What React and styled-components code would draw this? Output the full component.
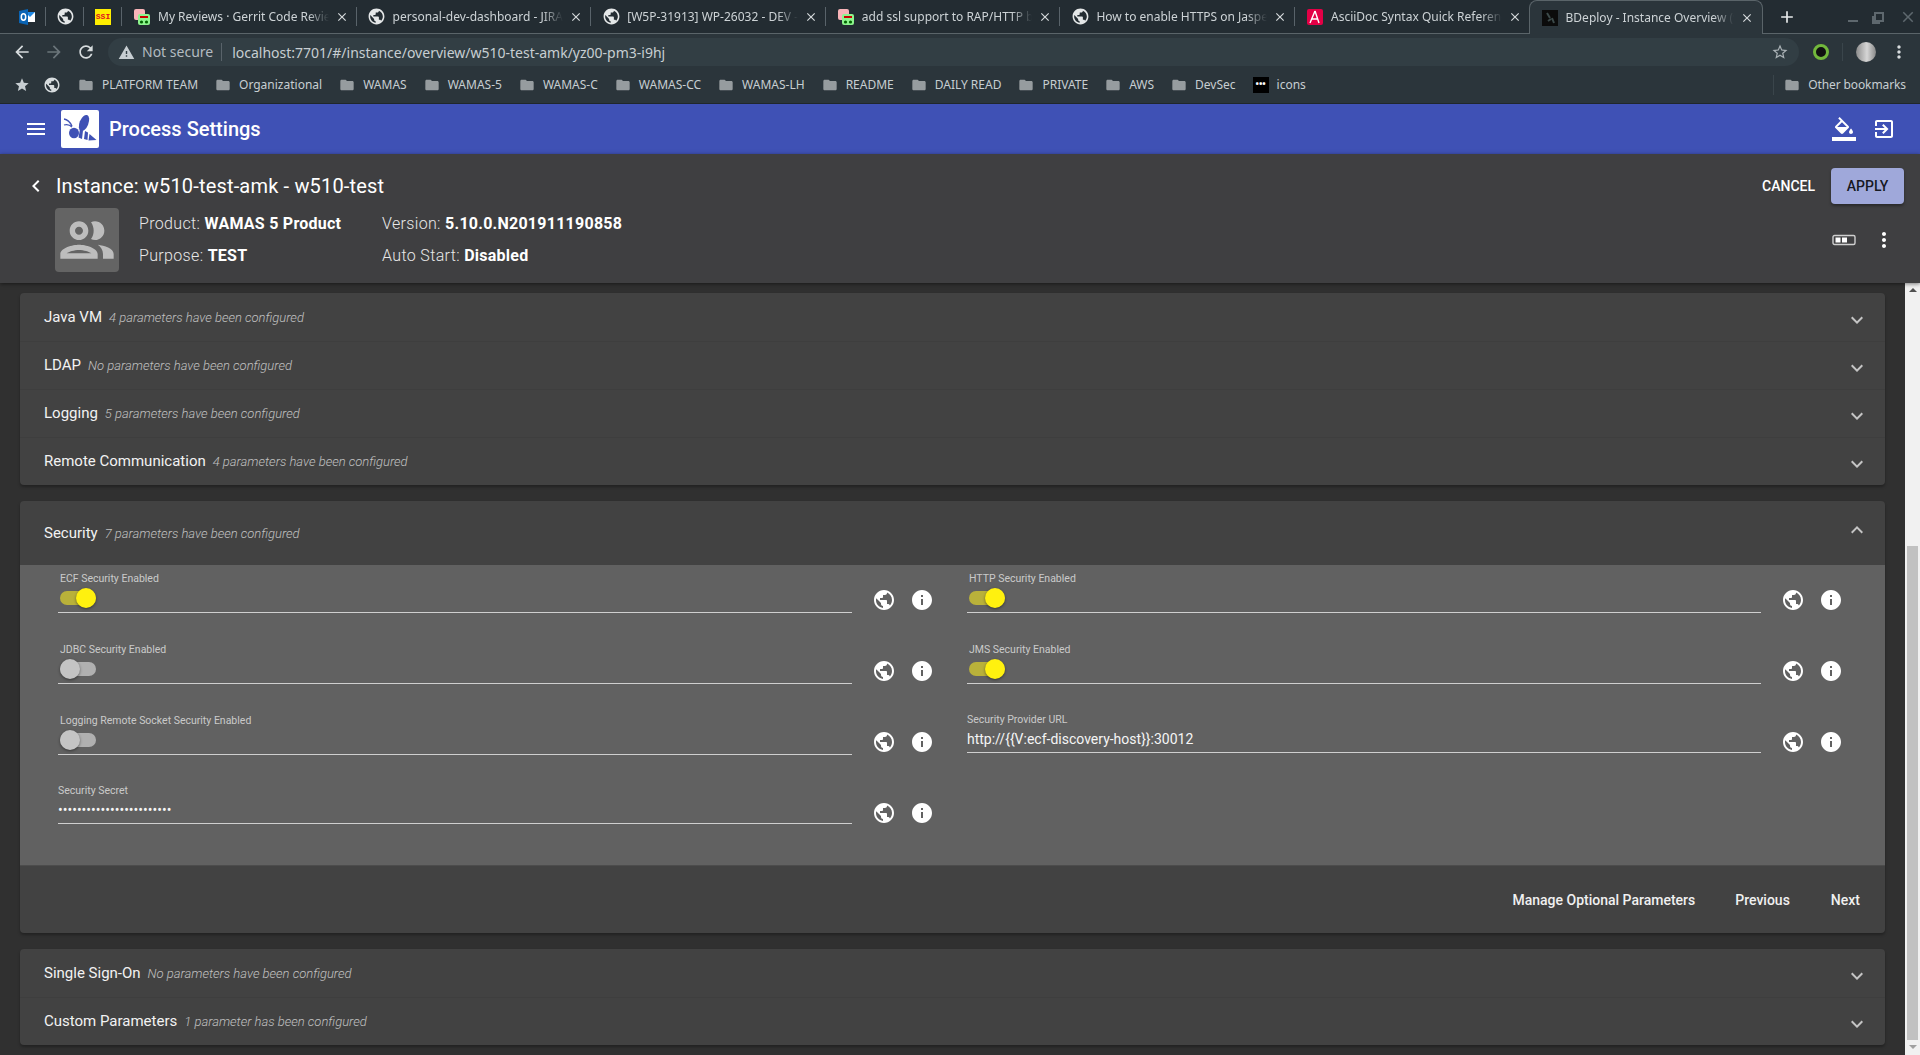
import React from "react"
import styled, { createGlobalStyle } from "styled-components"

const paths = {
    globe: "M12 2C6.48 2 2 6.48 2 12s4.48 10 10 10 10-4.48 10-10S17.52 2 12 2zm-1 17.93c-3.95-.49-7-3.85-7-7.93 0-.62.08-1.21.21-1.79L9 15v1c0 1.1.9 2 2 2v1.93zm6.9-2.54c-.26-.81-1-1.39-1.9-1.39h-1v-3c0-.55-.45-1-1-1H8v-2h2c.55 0 1-.45 1-1V7h2c1.1 0 2-.9 2-2v-.41c2.93 1.19 5 4.06 5 7.41 0 2.08-.8 3.97-2.1 5.39z",
    info: "M12 2C6.48 2 2 6.48 2 12s4.48 10 10 10 10-4.48 10-10S17.52 2 12 2zm1 15h-2v-6h2v6zm0-8h-2V7h2v2z",
    expandMore: "M16.59 8.59L12 13.17 7.41 8.59 6 10l6 6 6-6z",
    expandLess: "M12 8l-6 6 1.41 1.41L12 10.83l4.59 4.58L18 14z",
    menu: "M3 18h18v-2H3v2zm0-5h18v-2H3v2zm0-7v2h18V6H3z",
    fill: "M16.56 8.94L7.62 0 6.21 1.41l2.38 2.38-5.15 5.15c-.59.59-.59 1.54 0 2.12l5.5 5.5c.29.29.68.44 1.06.44s.77-.15 1.06-.44l5.5-5.5c.59-.58.59-1.53 0-2.12zM5.21 10L10 5.21 14.79 10H5.21zM19 11.5s-2 2.17-2 3.5c0 1.1.9 2 2 2s2-.9 2-2c0-1.33-2-3.5-2-3.5zM0 20h24v4H0z",
    exit: "M10.09 15.59L11.5 17l5-5-5-5-1.41 1.41L12.67 11H3v2h9.67l-2.58 2.59zM19 3H5c-1.11 0-2 .9-2 2v4h2V5h14v14H5v-4H3v4c0 1.1.89 2 2 2h14c1.1 0 2-.9 2-2V5c0-1.1-.9-2-2-2z",
    moreVert: "M12 8c1.1 0 2-.9 2-2s-.9-2-2-2-2 .9-2 2 .9 2 2 2zm0 2c-1.1 0-2 .9-2 2s.9 2 2 2 2-.9 2-2-.9-2-2-2zm0 6c-1.1 0-2 .9-2 2s.9 2 2 2 2-.9 2-2-.9-2-2-2z",
    chevronLeft: "M15.41 7.41L14 6l-6 6 6 6 1.41-1.41L10.83 12z",
    people: "M9 13.75c-2.34 0-7 1.17-7 3.5V19h14v-1.75c0-2.33-4.66-3.5-7-3.5zM4.34 17c.84-.58 2.87-1.25 4.66-1.25s3.82.67 4.66 1.25H4.34zM9 12c1.93 0 3.5-1.57 3.5-3.5S10.93 5 9 5 5.5 6.57 5.5 8.5 7.07 12 9 12zm0-5c.83 0 1.5.67 1.5 1.5S9.83 10 9 10s-1.5-.67-1.5-1.5S8.17 7 9 7zm7.04 6.81c1.16.84 1.96 1.96 1.96 3.44V19h4v-1.75c0-2.02-3.5-3.17-5.96-3.44zM15 12c1.93 0 3.5-1.57 3.5-3.5S16.93 5 15 5c-.54 0-1.04.13-1.5.35.63.89 1 1.98 1 3.15s-.37 2.26-1 3.15c.46.22.96.35 1.5.35z",
    warning: "M1 21h22L12 2 1 21zm12-3h-2v-2h2v2zm0-4h-2v-4h2v4z",
    back: "M20 11H7.83l5.59-5.59L12 4l-8 8 8 8 1.41-1.41L7.83 13H20v-2z",
    forward: "M12 4l-1.41 1.41L16.17 11H4v2h12.17l-5.58 5.59L12 20l8-8z",
    refresh: "M17.65 6.35C16.2 4.9 14.21 4 12 4c-4.42 0-7.99 3.58-7.99 8s3.57 8 7.99 8c3.73 0 6.84-2.55 7.73-6h-2.08c-.82 2.33-3.04 4-5.65 4-3.31 0-6-2.69-6-6s2.69-6 6-6c1.66 0 3.14.69 4.22 1.78L13 11h7V4l-2.35 2.35z",
    star: "M12 17.27L18.18 21l-1.64-7.03L22 9.24l-7.19-.61L12 2 9.19 8.63 2 9.24l5.46 4.73L5.82 21z",
    starBorder: "M22 9.24l-7.19-.62L12 2 9.19 8.63 2 9.24l5.46 4.73L5.82 21 12 17.27 18.18 21l-1.63-7.03L22 9.24zM12 15.4l-3.76 2.27 1-4.28-3.32-2.88 4.38-.38L12 6.1l1.71 4.04 4.38.38-3.32 2.88 1 4.28L12 15.4z",
    folder: "M10 4H4c-1.1 0-1.99.9-1.99 2L2 18c0 1.1.9 2 2 2h16c1.1 0 2-.9 2-2V8c0-1.1-.9-2-2-2h-8l-2-2z",
    close: "M19 6.41L17.59 5 12 10.59 6.41 5 5 6.41 10.59 12 5 17.59 6.41 19 12 13.41 17.59 19 19 17.59 13.41 12z",
    plus: "M19 13h-6v6h-2v-6H5v-2h6V5h2v6h6v2z",
}

const Svg = styled.svg`
    width: ${props => props.$size || 24}px;
    height: ${props => props.$size || 24}px;
    fill: ${props => props.$color || "#fff"};
    flex: none;
    display: block;
`

const Icon = ({ name, size, color }) => (
    <Svg viewBox="0 0 24 24" $size={size} $color={color}><path d={paths[name]} /></Svg>
)

const GlobalStyle = createGlobalStyle`
    html, body {
        margin: 0;
        height: 100%;
        overflow: hidden;
        background: #303030;
    }
    * {
        box-sizing: border-box;
    }
`

const Page = styled.div`
    display: flex;
    flex-direction: column;
    height: 1055px;
    font-family: Roboto, "Liberation Sans", sans-serif;
    color: #fff;
`

/* browser chrome */
const TabStrip = styled.div`
    height: 34px;
    display: flex;
    padding-left: 8px;
    background: #232c32;
    border-bottom: 1px solid #5a6469;
    font-family: "Noto Sans", sans-serif;
    font-size: 12px;
    color: #cdd3d6;
`

const PinnedTab = styled.div`
    width: 38px;
    height: 33px;
    display: flex;
    align-items: center;
    justify-content: center;
    position: relative;
    &::after {
        content: "";
        position: absolute;
        right: 0;
        top: 7px;
        height: 19px;
        width: 1px;
        background: #59636a;
    }
`

const Tab = styled.div`
    width: 234.6px;
    height: ${props => props.$active ? 34 : 33}px;
    display: flex;
    align-items: center;
    padding: 0 8px 0 12px;
    position: relative;
    background: ${props => props.$active ? "#2b353b" : "transparent"};
    border: ${props => props.$active ? "1px solid #5a6469" : "0"};
    border-bottom: 0;
    border-radius: ${props => props.$active ? "8px 8px 0 0" : "0"};
    margin-left: ${props => props.$active ? "-1px" : "0"};
    z-index: ${props => props.$active ? 1 : 0};
    &::after {
        content: "";
        display: ${props => props.$plain ? "none" : "block"};
        position: absolute;
        right: 0;
        top: 7px;
        height: 19px;
        width: 1px;
        background: #59636a;
    }
`

const FaviconSlot = styled.div`
    width: 16px;
    height: 16px;
    flex: none;
    display: flex;
    align-items: center;
    justify-content: center;
`

const TabTitle = styled.span`
    flex: 1;
    margin: 0 6px 0 8px;
    white-space: nowrap;
    overflow: hidden;
    line-height: 33px;
    -webkit-mask-image: linear-gradient(to right, #000 88%, transparent 100%);
    mask-image: linear-gradient(to right, #000 88%, transparent 100%);
`

const NewTab = styled.div`
    width: 44px;
    height: 33px;
    padding-left: 4px;
    display: flex;
    align-items: center;
    justify-content: center;
`

const WindowControls = styled.div`
    margin-left: auto;
    width: 76px;
    height: 33px;
    display: flex;
    align-items: center;
    justify-content: space-between;
    padding: 0 3px 0 4px;
`

const WindowDash = styled.div`
    width: 10px;
    height: 2px;
    margin-top: 9px;
    background: #5e686e;
`

const WindowMax = styled.div`
    width: 10px;
    height: 10px;
    border: 2px solid #5e686e;
    box-shadow: -3px 3px 0 -1px #5e686e;
`

const Favicon = styled.svg`
    width: 16px;
    height: 16px;
    flex: none;
    display: block;
`

const SsiIcon = styled.div`
    width: 16px;
    height: 16px;
    flex: none;
    background: #ffee00;
    color: #e01020;
    font-family: "Liberation Mono", monospace;
    font-size: 8px;
    font-weight: 700;
    line-height: 16px;
    text-align: center;
`

const Toolbar = styled.div`
    height: 32px;
    padding-top: 4px;
    display: flex;
    background: #2b353b;
    font-family: "Noto Sans", sans-serif;
    color: #c7ced2;
`

const NavButton = styled.div`
    width: 32px;
    height: 28px;
    display: flex;
    align-items: center;
    justify-content: center;
`

const NavGroup = styled.div`
    display: flex;
    padding-left: 6px;
    width: 108px;
`

const Omnibox = styled.div`
    width: 1691px;
    height: 28px;
    border-radius: 14px;
    background: #323e44;
    display: flex;
    align-items: center;
    padding: 0 10px 0 10px;
    font-size: 14px;
`

const NotSecure = styled.span`
    margin-left: 7px;
    color: #b3bbc0;
    padding-right: 8px;
    border-right: 1px solid #59636a;
    line-height: 18px;
`

const Url = styled.span`
    margin-left: 10px;
    flex: 1;
    color: #c7ced2;
`

const ToolbarRight = styled.div`
    flex: 1;
    display: flex;
    align-items: center;
    height: 28px;
    padding-left: 14px;
`

const ExtensionIcon = styled.div`
    width: 16px;
    height: 16px;
    border-radius: 50%;
    background: #111;
    border: 3px solid #72b83c;
`

const ToolbarDivider = styled.div`
    width: 1px;
    height: 18px;
    margin: 0 13px;
    background: #3a454b;
`

const Avatar = styled.div`
    width: 20px;
    height: 20px;
    margin-right: 13px;
    border-radius: 50%;
    background: linear-gradient(90deg, #8c8c8c, #d6d6d6 55%, #888);
`

const BookmarkBar = styled.div`
    height: 38px;
    display: flex;
    align-items: center;
    background: #2b353b;
    border-bottom: 1px solid #20272b;
    font-family: "Noto Sans", sans-serif;
    font-size: 12px;
    color: #c7ced2;
    padding-left: 14px;
`

const Bookmark = styled.div`
    display: flex;
    align-items: center;
    gap: ${props => props.$gap || 8}px;
    margin-right: 17px;
    white-space: nowrap;
`

const OtherBookmarks = styled.div`
    margin-left: auto;
    padding-left: 10px;
    padding-right: 14px;
    display: flex;
    align-items: center;
    gap: 8px;
    border-left: 1px solid #3a454b;
    height: 20px;
    letter-spacing: -0.1px;
`

const IconsFavicon = styled.div`
    width: 16px;
    height: 16px;
    background: #000;
    color: #fff;
    font-size: 9px;
    line-height: 14px;
    font-weight: 700;
    text-align: center;
`

/* application */
const AppBar = styled.div`
    height: 50px;
    flex: none;
    background: #3f51b5;
    display: flex;
    align-items: center;
    padding: 0 24px;
`

const Logo = styled.div`
    width: 38px;
    height: 38px;
    margin-left: 13px;
    border-radius: 2px;
    background: #fff;
`

const AppTitle = styled.div`
    margin-left: 10px;
    font-size: 20px;
    font-weight: 500;
    flex: 1;
`

const AppActions = styled.div`
    display: flex;
    gap: 16px;
`

const InstanceHeader = styled.div`
    height: 129px;
    flex: none;
    padding: 14px 16px 0 0;
    background: #3f3f41;
    box-shadow: 0 1px 4px rgba(0, 0, 0, 0.5);
    position: relative;
    z-index: 2;
`

const TitleRow = styled.div`
    height: 36px;
    display: flex;
    align-items: center;
    padding-left: 24px;
`

const InstanceTitle = styled.div`
    margin-left: 8px;
    font-size: 20px;
    letter-spacing: 0.17px;
    flex: 1;
`

const CancelButton = styled.div`
    font-size: 14px;
    font-weight: 500;
    padding: 0 16px;
`

const ApplyButton = styled.div`
    width: 73px;
    height: 36px;
    border-radius: 4px;
    background: #9fa8da;
    color: rgba(0, 0, 0, 0.87);
    font-size: 14px;
    font-weight: 500;
    line-height: 36px;
    text-align: center;
    box-shadow: 0 2px 3px rgba(0, 0, 0, 0.35);
`

const DetailRow = styled.div`
    height: 64px;
    margin-top: 4px;
    display: flex;
    align-items: center;
    padding: 0 8px 0 55px;
`

const InstanceAvatar = styled.div`
    width: 64px;
    height: 64px;
    border-radius: 4px;
    background: #646464;
    display: flex;
    align-items: center;
    justify-content: center;
`

const DetailGrid = styled.div`
    margin: -2px 0 0 20px;
    flex: 1;
    display: grid;
    grid-template-columns: 243px 1fr;
    grid-auto-rows: 32px;
    align-items: center;
    font-size: 16px;
    font-weight: 300;
    letter-spacing: 0.35px;
    color: #e8e8e8;
    strong {
        font-weight: 700;
        letter-spacing: 0.25px;
        color: #fff;
    }
`

const DetailActions = styled.div`
    display: flex;
    align-items: center;
    gap: 16px;
`

const Body = styled.div`
    flex: 1;
    min-height: 0;
    display: flex;
    background: #303030;
`

const Content = styled.div`
    flex: 1;
    padding: 10px 20px 0;
    display: flex;
    flex-direction: column;
    gap: 16px;
`

const Card = styled.div`
    border-radius: 4px;
    background: #424242;
    box-shadow: 0 2px 3px rgba(0, 0, 0, 0.3);
    overflow: hidden;
`

const PanelRow = styled.div`
    height: ${props => props.$open ? 64 : 48}px;
    display: flex;
    align-items: center;
    padding: 0 16px 0 24px;
    & + & {
        box-shadow: inset 0 1px 0 rgba(0, 0, 0, 0.06);
    }
`

const PanelTitle = styled.span`
    font-size: 15px;
    color: #f2f2f2;
`

const PanelNote = styled.span`
    margin-left: 7px;
    flex: 1;
    font-size: 13px;
    font-style: italic;
    font-weight: 300;
    color: rgba(255, 255, 255, 0.68);
`

const PanelChevron = styled.div`
    margin-top: ${props => props.$open ? -6 : 6}px;
`

const FormArea = styled.div`
    height: 300px;
    padding: 5px 0 0 38px;
    background: #616161;
    display: grid;
    grid-template-columns: 909px 1fr;
    grid-auto-rows: 71px;
`

const ParamCell = styled.div`
    display: flex;
    align-items: flex-start;
`

const Field = styled.div`
    width: 794px;
    height: ${props => props.$text ? 41 : 43}px;
    border-bottom: 1px solid #cfcfcf;
    display: flex;
    flex-direction: column;
`

const FieldLabel = styled.div`
    font-size: 10.5px;
    line-height: 14px;
    color: rgba(255, 255, 255, 0.68);
    padding-left: ${props => props.$text ? 0 : 2}px;
    margin-top: ${props => props.$text ? 1 : 2}px;
`

const FieldValue = styled.div`
    margin-top: 4px;
    font-size: 14px;
    line-height: 16px;
    color: #f5f5f5;
`

const SwitchTrack = styled.div`
    width: 36px;
    height: 14px;
    margin: 5px 0 0 2px;
    border-radius: 7px;
    position: relative;
    background: ${props => props.$on ? "#b9b13a" : "#b0b0b0"};
`

const SwitchThumb = styled.div`
    position: absolute;
    top: -3px;
    left: ${props => props.$on ? 16 : 0}px;
    width: 20px;
    height: 20px;
    border-radius: 50%;
    background: ${props => props.$on ? "#fff10f" : "#c4c4c4"};
    box-shadow: 0 1px 3px rgba(0, 0, 0, 0.45);
`

const ParamActions = styled.div`
    display: flex;
    gap: 14px;
    margin: 18px 0 0 20px;
`

const CardActions = styled.div`
    height: 68px;
    display: flex;
    align-items: center;
    justify-content: flex-end;
    padding-right: 25px;
    font-size: 14px;
    font-weight: 500;
    color: #f0f0f0;
    gap: 40px;
    border-top: 1px solid #4c4c4c;
    span:last-child {
        margin-left: 1px;
    }
`

const ScrollTrack = styled.div`
    width: 15px;
    flex: none;
    background: #f1f1f1;
    display: flex;
    flex-direction: column;
    align-items: center;
`

const ScrollThumb = styled.div`
    width: 11px;
    height: 494px;
    margin-top: 254px;
    background: #c1c1c1;
`

const ArrowUp = styled.div`
    margin-top: 5px;
    width: 0;
    height: 0;
    border-left: 4px solid transparent;
    border-right: 4px solid transparent;
    border-bottom: 4px solid #505050;
`

const ArrowDown = styled.div`
    margin-top: 5px;
    width: 0;
    height: 0;
    border-left: 4px solid transparent;
    border-right: 4px solid transparent;
    border-top: 4px solid #a0a0a0;
`

const GerritIcon = () => (
    <Favicon viewBox="0 0 16 16">
        <rect x="0" y="0" width="11" height="11" rx="2" fill="#f8b4b8" />
        <rect x="4" y="5" width="12" height="11" rx="2" fill="#8df58d" />
        <rect x="6" y="7" width="8" height="2" fill="#c00" />
        <circle cx="7.5" cy="13" r="1.6" fill="#060" />
        <circle cx="12.5" cy="13" r="1.6" fill="#060" />
    </Favicon>
)

const OutlookIcon = () => (
    <Favicon viewBox="0 0 16 16">
        <rect x="6" y="3" width="10" height="10" fill="#fff" />
        <path d="M6 3h10L11 8z" fill="#1e88e5" />
        <path d="M0 2l9-2v16l-9-2z" fill="#0a64b4" />
        <ellipse cx="4.5" cy="8" rx="2.2" ry="3.2" fill="none" stroke="#fff" strokeWidth="1.5" />
    </Favicon>
)

const AsciiDocIcon = () => (
    <Favicon viewBox="0 0 16 16">
        <rect width="16" height="16" rx="2" fill="#e40046" />
        <path d="M8 2L3 14M8 2l4 12M5 10h6" stroke="#fff" strokeWidth="1.4" fill="none" />
    </Favicon>
)

const BDeployIcon = () => (
    <Favicon viewBox="0 0 16 16">
        <rect width="16" height="16" fill="#0b0b0b" />
        <path d="M5 3l3 5M10 8l2 5M6 11l3-2" stroke="#3c4a4a" strokeWidth="2" fill="none" />
    </Favicon>
)

const BeeLogo = () => (
    <svg viewBox="0 0 38 38" width="38" height="38">
        <ellipse cx="23" cy="13" rx="4.4" ry="8.5" transform="rotate(22 23 13)" fill="#3f51b5" />
        <path d="M3 9c3 .5 6 3 8 7M3 15c3-1 6 0 8 2" stroke="#3f51b5" strokeWidth="1.3" fill="none" />
        <ellipse cx="13" cy="23" rx="5" ry="5.2" fill="#3f51b5" />
        <path d="M19 19l3 1.5-1 8.5-3.5-1.5zM24 21l3 1.5-.5 7.5-3.5-1zM28.5 24l7 6-8 .5z" fill="#3f51b5" />
    </svg>
)

const ToggleViewIcon = () => (
    <svg viewBox="0 0 24 12" width="24" height="12">
        <rect x="1" y="1.5" width="22" height="9" rx="1.5" fill="none" stroke="#cfcfcf" strokeWidth="1.4" />
        <rect x="3.5" y="3.5" width="5" height="5" fill="#fff" />
        <rect x="10" y="3.5" width="5" height="5" fill="#fff" />
    </svg>
)

const globeFavicon = <Icon name="globe" size={19} color="#e4e7e8" />

const tabs = [
    { title: "My Reviews · Gerrit Code Review", icon: <GerritIcon /> },
    { title: "personal-dev-dashboard - JIRA", icon: globeFavicon },
    { title: "[W5P-31913] WP-26032 - DEV - Jira", icon: globeFavicon },
    { title: "add ssl support to RAP/HTTP backend", icon: <GerritIcon /> },
    { title: "How to enable HTTPS on JasperReports", icon: globeFavicon },
    { title: "AsciiDoc Syntax Quick Reference", icon: <AsciiDocIcon />, plain: true },
    { title: "BDeploy - Instance Overview (w510-test)", icon: <BDeployIcon />, active: true, plain: true },
]

const bookmarks = ["PLATFORM TEAM", "Organizational", "WAMAS", "WAMAS-5", "WAMAS-C", "WAMAS-CC", "WAMAS-LH", "README", "DAILY READ", "PRIVATE", "AWS", "DevSec"]

const topPanels = [
    ["Java VM", "4 parameters have been configured"],
    ["LDAP", "No parameters have been configured"],
    ["Logging", "5 parameters have been configured"],
    ["Remote Communication", "4 parameters have been configured"],
]

const bottomPanels = [
    ["Single Sign-On", "No parameters have been configured"],
    ["Custom Parameters", "1 parameter has been configured"],
]

const params = [
    { label: "ECF Security Enabled", on: true },
    { label: "HTTP Security Enabled", on: true },
    { label: "JDBC Security Enabled", on: false },
    { label: "JMS Security Enabled", on: true },
    { label: "Logging Remote Socket Security Enabled", on: false },
    { label: "Security Provider URL", value: "http://{{V:ecf-discovery-host}}:30012" },
    { label: "Security Secret", value: "•".repeat(24) },
]

const Param = ({ label, on, value }) => (
    <ParamCell>
        {value ? (
            <Field $text>
                <FieldLabel $text>{label}</FieldLabel>
                <FieldValue>{value}</FieldValue>
            </Field>
        ) : (
            <Field>
                <FieldLabel>{label}</FieldLabel>
                <SwitchTrack $on={on}><SwitchThumb $on={on} /></SwitchTrack>
            </Field>
        )}
        <ParamActions>
            <Icon name="globe" />
            <Icon name="info" />
        </ParamActions>
    </ParamCell>
)

const Panel = ({ title, note }) => (
    <PanelRow>
        <PanelTitle>{title}</PanelTitle>
        <PanelNote>{note}</PanelNote>
        <PanelChevron><Icon name="expandMore" color="#c4c4c4" /></PanelChevron>
    </PanelRow>
)

export default function App() {
    return (
        <Page>
            <GlobalStyle />
            <TabStrip>
                <PinnedTab><OutlookIcon /></PinnedTab>
                <PinnedTab>{globeFavicon}</PinnedTab>
                <PinnedTab><SsiIcon>SSI</SsiIcon></PinnedTab>
                {tabs.map(tab => (
                    <Tab key={tab.title} $active={tab.active} $plain={tab.plain}>
                        <FaviconSlot>{tab.icon}</FaviconSlot>
                        <TabTitle>{tab.title}</TabTitle>
                        <Icon name="close" size={14} color="#d6dadc" />
                    </Tab>
                ))}
                <NewTab><Icon name="plus" size={20} color="#e8eaeb" /></NewTab>
                <WindowControls>
                    <WindowDash />
                    <WindowMax />
                    <Icon name="close" size={18} color="#5e686e" />
                </WindowControls>
            </TabStrip>
            <Toolbar>
                <NavGroup>
                    <NavButton><Icon name="back" size={20} color="#d7dcde" /></NavButton>
                    <NavButton><Icon name="forward" size={20} color="#6b757a" /></NavButton>
                    <NavButton><Icon name="refresh" size={20} color="#d7dcde" /></NavButton>
                </NavGroup>
                <Omnibox>
                    <Icon name="warning" size={17} color="#c7ced2" />
                    <NotSecure>Not secure</NotSecure>
                    <Url>localhost:7701/#/instance/overview/w510-test-amk/yz00-pm3-i9hj</Url>
                    <Icon name="starBorder" size={18} color="#aab2b6" />
                </Omnibox>
                <ToolbarRight>
                    <ExtensionIcon />
                    <ToolbarDivider />
                    <Avatar />
                    <Icon name="moreVert" size={20} color="#d7dcde" />
                </ToolbarRight>
            </Toolbar>
            <BookmarkBar>
                <Bookmark $gap={13}>
                    <Icon name="star" size={16} color="#c7ced2" />
                    <Icon name="globe" size={18} color="#d7dcde" />
                </Bookmark>
                {bookmarks.map(name => (
                    <Bookmark key={name}>
                        <Icon name="folder" size={16} color="#969c9f" />
                        {name}
                    </Bookmark>
                ))}
                <Bookmark>
                    <IconsFavicon>•••</IconsFavicon>
                    icons
                </Bookmark>
                <OtherBookmarks>
                    <Icon name="folder" size={16} color="#969c9f" />
                    Other bookmarks
                </OtherBookmarks>
            </BookmarkBar>
            <AppBar>
                <Icon name="menu" />
                <Logo><BeeLogo /></Logo>
                <AppTitle>Process Settings</AppTitle>
                <AppActions>
                    <Icon name="fill" />
                    <Icon name="exit" />
                </AppActions>
            </AppBar>
            <InstanceHeader>
                <TitleRow>
                    <Icon name="chevronLeft" />
                    <InstanceTitle>Instance: w510-test-amk - w510-test</InstanceTitle>
                    <CancelButton>CANCEL</CancelButton>
                    <ApplyButton>APPLY</ApplyButton>
                </TitleRow>
                <DetailRow>
                    <InstanceAvatar><Icon name="people" size={64} color="#bdbdbd" /></InstanceAvatar>
                    <DetailGrid>
                        <div>Product: <strong>WAMAS 5 Product</strong></div>
                        <div>Version: <strong>5.10.0.N201911190858</strong></div>
                        <div>Purpose: <strong>TEST</strong></div>
                        <div>Auto Start: <strong>Disabled</strong></div>
                    </DetailGrid>
                    <DetailActions>
                        <ToggleViewIcon />
                        <Icon name="moreVert" />
                    </DetailActions>
                </DetailRow>
            </InstanceHeader>
            <Body>
                <Content>
                    <Card>
                        {topPanels.map(([title, note]) => <Panel key={title} title={title} note={note} />)}
                    </Card>
                    <Card>
                        <PanelRow $open>
                            <PanelTitle>Security</PanelTitle>
                            <PanelNote>7 parameters have been configured</PanelNote>
                            <PanelChevron $open><Icon name="expandLess" color="#c4c4c4" /></PanelChevron>
                        </PanelRow>
                        <FormArea>
                            {params.map(param => <Param key={param.label} {...param} />)}
                        </FormArea>
                        <CardActions>
                            <span>Manage Optional Parameters</span>
                            <span>Previous</span>
                            <span>Next</span>
                        </CardActions>
                    </Card>
                    <Card>
                        {bottomPanels.map(([title, note]) => <Panel key={title} title={title} note={note} />)}
                    </Card>
                </Content>
                <ScrollTrack>
                    <ArrowUp />
                    <ScrollThumb />
                    <ArrowDown />
                </ScrollTrack>
            </Body>
        </Page>
    )
}
